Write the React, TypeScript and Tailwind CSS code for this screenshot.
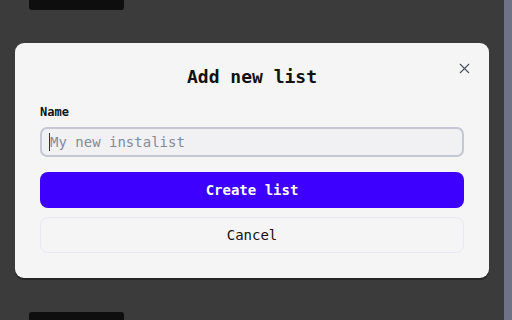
import { X } from 'lucide-react';

export default function App() {
  return (
    <div className="flex h-[320px] w-[512px] overflow-hidden bg-[#3b3b3b] font-['DejaVu_Sans_Mono',monospace]">
      <div className="flex flex-1 flex-col">
        {/* blurred list behind the dialog */}
        <div className="ml-[29px] h-[10px] w-[95px] rounded-b-[3px] bg-[#0e0e0e] blur-[0.5px]" />
        <div className="mt-[33px] ml-[15px] mr-[15px] flex flex-col rounded-[9px] bg-[#f5f5f5] px-[25px] pb-[25px] pt-[22px] shadow-[0_2px_0_rgba(0,0,0,0.35)]">
          <div className="relative flex items-center justify-center">
            <h2 className="text-[18px] font-bold leading-[24px] text-[#111]">Add new list</h2>
            <button className="absolute right-[-9px] top-[-5px] text-[#4a4d5c]">
              <X size={17} strokeWidth={1.5} />
            </button>
          </div>
          <label className="mt-[15px] text-[12px] font-bold leading-[16px] text-[#111]">Name</label>
          <div className="mt-[7px] flex h-[30px] items-center rounded-[7px] border-2 border-[#c5c8d4] bg-[#f1f1f3] pl-[7px]">
            <span className="h-[18px] w-[1px] bg-[#333]" />
            <span className="text-[14px] leading-[18px] text-[#858a96]">My new instalist</span>
          </div>
          <button className="mt-[15px] flex h-[36px] items-center justify-center rounded-[8px] bg-[#3d00ff] text-[14px] font-bold text-white">
            Create list
          </button>
          <button className="mt-[9px] flex h-[36px] items-center justify-center rounded-[8px] border border-[#e9e9f1] bg-[#f5f5f6] text-[14px] text-[#111]">
            Cancel
          </button>
        </div>
        <div className="mt-auto ml-[29px] h-[8px] w-[95px] rounded-t-[3px] bg-[#0e0e0e] blur-[0.5px]" />
      </div>
      <div className="w-[8px] bg-[#6e7385]" />
    </div>
  );
}
